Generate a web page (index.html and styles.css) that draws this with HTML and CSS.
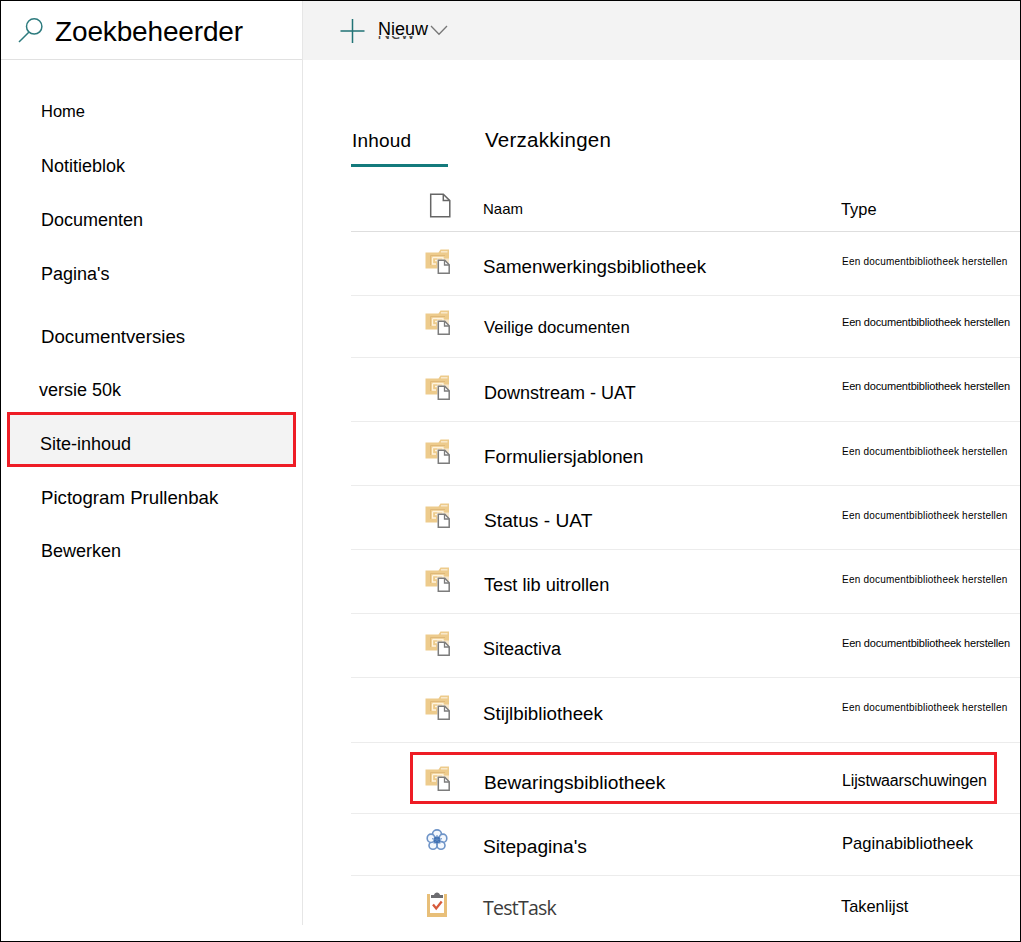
FILE: index.html
```html
<!DOCTYPE html>
<html lang="nl">
<head>
<meta charset="utf-8">
<title>Site-inhoud</title>
<link rel="stylesheet" href="styles.css">
</head>
<body>
<svg class="defs" width="0" height="0">
  <symbol id="library" viewBox="0 0 26 26">
    <path d="M.5 3.500h13L15.500.5h8.500V17H16v2.500H.5z" fill="#edcb8c"/>
    <path d="M16 2.800h6.500" stroke="#faeed6" stroke-width="1.300"/>
    <path d="M5.500 16V6.500H20" fill="none" stroke="#dfb878" stroke-width="1"/>
    <path d="M7.500 8.500H18V11M7.500 8.500V15H11M10 11.500h3v2" fill="none" stroke="#fff4df" stroke-width="1.300"/>
    <path d="M12 9.500h13V26H12z" fill="#fff" opacity=".55"/>
    <path d="M13.300 11.300h6.500l4.400 4.400v8.500H13.300z" fill="#fff" stroke="#7c7c7c" stroke-width="1.500"/>
    <path d="M19.500 11.500v4.500h4.500" fill="none" stroke="#7c7c7c" stroke-width="1.300"/>
  </symbol>
</svg>
<div class="page">
  <aside class="sidebar">
    <header class="brand">
      <svg class="search" width="26" height="27" viewBox="0 0 26 27" fill="none" stroke="#2d7b7e" stroke-width="1.500"><circle cx="16.200" cy="9.400" r="7.700"/><path d="M10.800 15.200L1 25"/></svg>
      <span class="title">Zoekbeheerder</span>
    </header>
    <nav class="nav">
      <a class="small">Home</a>
      <a>Notitieblok</a>
      <a>Documenten</a>
      <a>Pagina's</a>
      <a class="large">Documentversies</a>
      <a class="shifted">versie 50k</a>
      <a class="selected">Site-inhoud</a>
      <a class="large">Pictogram Prullenbak</a>
      <a>Bewerken</a>
    </nav>
  </aside>
  <main class="main">
    <div class="commands">
      <svg class="plus" width="25" height="25" viewBox="0 0 25 25" stroke="#217376" stroke-width="1.500"><path d="M12.500 0v24M.5 12h24"/></svg>
      <span class="new"><span class="under" aria-hidden="true"><i>New</i></span>Nieuw</span>
      <svg class="chevron" width="18" height="11" viewBox="0 0 18 11" fill="none" stroke="#777" stroke-width="1.300"><path d="M1 1l8 8.300L17 1"/></svg>
    </div>
    <div class="tabs">
      <span class="tab active">Inhoud</span>
      <span class="tab second">Verzakkingen</span>
    </div>
    <div class="list">
      <div class="row head">
        <svg class="icon" width="26" height="26" viewBox="0 0 26 26" fill="none" stroke="#666" stroke-width="1.500"><path d="M4.700 1.200h12.600l6.500 6.400v16.200H4.700z"/><path d="M17.300 1.400v6.200h6.300"/></svg>
        <span class="name">Naam</span><span class="type">Type</span>
      </div>
      <div class="row r1"><svg class="icon"><use href="#library"/></svg><span class="name n-large">Samenwerkingsbibliotheek</span><span class="type tiny">Een documentbibliotheek herstellen</span></div>
      <div class="row r2"><svg class="icon"><use href="#library"/></svg><span class="name n-small">Veilige documenten</span><span class="type tight">Een documentbibliotheek herstellen</span></div>
      <div class="row r3"><svg class="icon"><use href="#library"/></svg><span class="name indent">Downstream - UAT</span><span class="type tight">Een documentbibliotheek herstellen</span></div>
      <div class="row r4"><svg class="icon"><use href="#library"/></svg><span class="name n-large indent">Formuliersjablonen</span><span class="type tiny">Een documentbibliotheek herstellen</span></div>
      <div class="row r5"><svg class="icon"><use href="#library"/></svg><span class="name n-xl indent">Status - UAT</span><span class="type tiny">Een documentbibliotheek herstellen</span></div>
      <div class="row r6"><svg class="icon"><use href="#library"/></svg><span class="name n-mid indent">Test lib uitrollen</span><span class="type tiny">Een documentbibliotheek herstellen</span></div>
      <div class="row r7"><svg class="icon"><use href="#library"/></svg><span class="name">Siteactiva</span><span class="type tight">Een documentbibliotheek herstellen</span></div>
      <div class="row r8"><svg class="icon"><use href="#library"/></svg><span class="name n-large">Stijlbibliotheek</span><span class="type tiny">Een documentbibliotheek herstellen</span></div>
      <div class="row r9"><svg class="icon"><use href="#library"/></svg><span class="name n-xl indent">Bewaringsbibliotheek</span><span class="type alerts">Lijstwaarschuwingen</span></div>
      <div class="row r10">
        <svg class="icon" viewBox="0 0 26 26"><g fill="#f4f8fd" stroke="#6d93c7" stroke-width="1.600"><ellipse cx="12" cy="4.700" rx="4.400" ry="3.800"/><ellipse cx="18" cy="9.300" rx="3.800" ry="4.200"/><ellipse cx="16" cy="16.400" rx="4" ry="3.800"/><ellipse cx="8" cy="16.400" rx="4" ry="3.800"/><ellipse cx="6" cy="9.300" rx="3.800" ry="4.200"/></g><circle cx="12" cy="10.900" r="3.200" fill="#3f70b3"/><path d="M12 10.700V6M12 10.700l5-1M12 10.700l3 4M12 10.700l-3 4M12 10.700l-5-1" stroke="#5b86bf"/></svg>
        <span class="name n-xl">Sitepagina's</span><span class="type pages">Paginabibliotheek</span>
      </div>
      <div class="row r11">
        <svg class="icon" viewBox="0 0 26 26"><path d="M2 2h20v23H2z" fill="#e8bf79"/><path d="M5 2h14v19H5z" fill="#fff"/><path d="M6 6V3h3c.5-3.500 5.500-3.500 6 0h3v3z" fill="#6c6c70"/><path d="M8 12.500l3.200 4 5.500-7" fill="none" stroke="#d65a3c" stroke-width="2.300"/></svg>
        <span class="name task">TestTask</span><span class="type">Takenlijst</span>
      </div>
    </div>
  </main>
</div>
</body>
</html>
```
FILE: styles.css
```css
*, *::after { box-sizing: border-box; }
body { margin: 0; background: #fff; color: #000; font: 18px "Liberation Sans", Arial, sans-serif; }
.defs { position: absolute; }
.page { width: 1021px; height: 942px; border: 1px solid #000; display: flex; overflow: hidden; white-space: nowrap; }
svg { display: block; flex: none; }

.sidebar { width: 302px; height: 924px; border-right: 1px solid #e6e6e6; flex: none; }
.brand { height: 59px; border-bottom: 1px solid #e1e1e1; display: flex; padding-left: 17px; }
.search { margin-top: 16px; }
.title { margin-left: 11px; font-size: 28px; letter-spacing: -.15px; line-height: 32px; padding-top: 15px; }
.nav { padding-top: 19px; display: grid; grid-template-rows: 55px 54px 54px 63px 53px 54px 54px 53px 54px; }
.nav a { padding: 22px 0 0 40px; line-height: 20px; }
.nav .small { font-size: 16.5px; }
.nav .large { font-size: 18.67px; }
.nav .shifted { padding-left: 38px; }
.nav .selected { height: 55px; margin: 0 6px 0 6px; padding: 19px 0 0 30px; border: 3px solid #ee1c25; background: #f3f3f3; }

.main { flex: 1; min-width: 0; }
.commands { height: 59px; background: #f3f3f3; display: flex; padding-left: 37px; }
.plus { margin-top: 18px; }
.new { position: relative; margin-left: 13px; padding-top: 18px; line-height: 20px; }
/* lower edge of the previous label, showing below the current one */
.under { position: absolute; left: -1px; top: 35px; width: 42px; height: 5px; overflow: hidden; color: #444; font: 18px/20px "Open Sans", sans-serif; }
.under i { display: block; font-style: normal; margin-top: -14px; }
.chevron { margin: 24px 0 0 2px; }

.tabs { display: flex; padding: 66px 0 0 48px; height: 129px; gap: 36px; }
.tab { line-height: 24px; height: 41px; padding-top: 2px; }
.tab.active { width: 97px; height: 41px; border-bottom: 3px solid #147a7c; padding: 3px 0 0 1px; font-size: 19px; letter-spacing: .2px; }
.tab.second { font-size: 20.5px; padding: 2px 0 0 1px; letter-spacing: .25px; }

.list { margin-left: 48px; }
.row { position: relative; display: grid; grid-template-columns: 132px 358px 1fr; align-items: start; height: 64px; border-bottom: 1px solid #ececec; line-height: 24px; }
.icon { grid-area: 1 / 1; width: 26px; height: 26px; margin: var(--icon, 17px) 0 0 74px; }
.name { grid-area: 1 / 2; padding-top: var(--name, 23px); }
.name.indent { padding-left: 1px; }
.type { grid-area: 1 / 3; padding-top: var(--type, 16px); font-size: 16px; }
.head { height: 43px; border-color: #dedede; --icon: 4px; --name: 8px; --type: 8px; }
.head .icon { margin-left: 75px; }
.head .name { font-size: 15px; }
.head .type { font-size: 16.4px; }
.n-mid { font-size: 18.2px; }
.n-large { font-size: 18.75px; }
.name.n-small { font-size: 16.7px; padding-left: 1px; }
.n-xl { font-size: 19.2px; }
.tiny { font-size: 10px; letter-spacing: .21px; padding-left: 1px; }
.tight { font-size: 11px; letter-spacing: -.19px; padding-left: 1px; }
.alerts { letter-spacing: -.15px; padding-left: 1px; }
.pages { font-size: 16.6px; padding-left: 1px; }
.task { font-family: "Open Sans", "Noto Sans", sans-serif; font-size: 19.5px; letter-spacing: -.75px; color: #3c3c3c; }
.r1 { --type: 18px; }
.r2 { height: 62px; --icon: 14px; --name: 20px; --type: 14px; }
.r4, .r5, .r6, .r7, .r8 { --type: 18px; }
.r7 { --type: 17px; }
.r8 { height: 65px; --name: 24px; }
.r9 { height: 71px; --icon: 23px; --name: 28px; --type: 26px; }
.r10 { height: 62px; --icon: 15px; --name: 21px; --type: 18px; }
.r11 { border: 0; --icon: 16px; --name: 20px; --type: 18px; }
.r11 .type { font-size: 16.4px; }
/* highlighted list entry */
.r9::after { content: ""; position: absolute; left: 59px; top: 9px; width: 587px; height: 52px; border: 3px solid #ee1c25; }
```
